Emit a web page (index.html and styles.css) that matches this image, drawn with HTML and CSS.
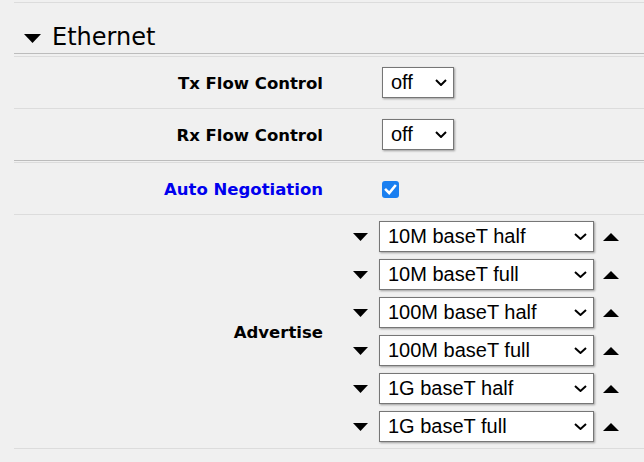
FILE: index.html
```html
<!DOCTYPE html>
<html lang="en">
<head>
<meta charset="utf-8">
<title>Ethernet</title>
<link rel="stylesheet" href="styles.css">
</head>
<body>
<div class="page">
  <div class="rule-top"></div>
  <h2 class="heading">
    <svg class="caret" width="17" height="9" viewBox="0 0 17 9"><polygon points="0,0 17,0 8.5,9" fill="#000"/></svg>
    <span>Ethernet</span>
  </h2>

  <div class="group">
    <div class="row">
      <div class="label">Tx Flow Control</div>
      <div class="control">
        <div class="select small"><span>off</span><svg class="chev" width="12" height="7" viewBox="0 0 12 7"><polyline points="1,1 6,6 11,1" fill="none" stroke="#000" stroke-width="2"/></svg></div>
      </div>
    </div>
    <div class="row">
      <div class="label">Rx Flow Control</div>
      <div class="control">
        <div class="select small"><span>off</span><svg class="chev" width="12" height="7" viewBox="0 0 12 7"><polyline points="1,1 6,6 11,1" fill="none" stroke="#000" stroke-width="2"/></svg></div>
      </div>
    </div>
  </div>

  <div class="group second">
    <div class="row">
      <div class="label link">Auto Negotiation</div>
      <div class="control">
        <span class="check" role="checkbox" aria-checked="true"><svg width="17" height="17" viewBox="0 0 17 17"><polyline points="4,8.8 7.2,12 13,5" fill="none" stroke="#fff" stroke-width="2.6" stroke-linecap="square"/></svg></span>
      </div>
    </div>
    <div class="row tall">
      <div class="label">Advertise</div>
      <div class="list">
        <div class="item">
          <svg class="tri" width="15" height="8" viewBox="0 0 15 8"><polygon points="0,0 15,0 7.5,8" fill="#000"/></svg>
          <div class="select wide"><span>10M baseT half</span><svg class="chev" width="13" height="7" viewBox="0 0 13 7"><polyline points="1,1 6.5,6 12,1" fill="none" stroke="#000" stroke-width="2"/></svg></div>
          <svg class="tri up" width="16" height="8" viewBox="0 0 16 8"><polygon points="0,8 16,8 8,0" fill="#000"/></svg>
        </div>
        <div class="item">
          <svg class="tri" width="15" height="8" viewBox="0 0 15 8"><polygon points="0,0 15,0 7.5,8" fill="#000"/></svg>
          <div class="select wide"><span>10M baseT full</span><svg class="chev" width="13" height="7" viewBox="0 0 13 7"><polyline points="1,1 6.5,6 12,1" fill="none" stroke="#000" stroke-width="2"/></svg></div>
          <svg class="tri up" width="16" height="8" viewBox="0 0 16 8"><polygon points="0,8 16,8 8,0" fill="#000"/></svg>
        </div>
        <div class="item">
          <svg class="tri" width="15" height="8" viewBox="0 0 15 8"><polygon points="0,0 15,0 7.5,8" fill="#000"/></svg>
          <div class="select wide"><span>100M baseT half</span><svg class="chev" width="13" height="7" viewBox="0 0 13 7"><polyline points="1,1 6.5,6 12,1" fill="none" stroke="#000" stroke-width="2"/></svg></div>
          <svg class="tri up" width="16" height="8" viewBox="0 0 16 8"><polygon points="0,8 16,8 8,0" fill="#000"/></svg>
        </div>
        <div class="item">
          <svg class="tri" width="15" height="8" viewBox="0 0 15 8"><polygon points="0,0 15,0 7.5,8" fill="#000"/></svg>
          <div class="select wide"><span>100M baseT full</span><svg class="chev" width="13" height="7" viewBox="0 0 13 7"><polyline points="1,1 6.5,6 12,1" fill="none" stroke="#000" stroke-width="2"/></svg></div>
          <svg class="tri up" width="16" height="8" viewBox="0 0 16 8"><polygon points="0,8 16,8 8,0" fill="#000"/></svg>
        </div>
        <div class="item">
          <svg class="tri" width="15" height="8" viewBox="0 0 15 8"><polygon points="0,0 15,0 7.5,8" fill="#000"/></svg>
          <div class="select wide"><span>1G baseT half</span><svg class="chev" width="13" height="7" viewBox="0 0 13 7"><polyline points="1,1 6.5,6 12,1" fill="none" stroke="#000" stroke-width="2"/></svg></div>
          <svg class="tri up" width="16" height="8" viewBox="0 0 16 8"><polygon points="0,8 16,8 8,0" fill="#000"/></svg>
        </div>
        <div class="item">
          <svg class="tri" width="15" height="8" viewBox="0 0 15 8"><polygon points="0,0 15,0 7.5,8" fill="#000"/></svg>
          <div class="select wide"><span>1G baseT full</span><svg class="chev" width="13" height="7" viewBox="0 0 13 7"><polyline points="1,1 6.5,6 12,1" fill="none" stroke="#000" stroke-width="2"/></svg></div>
          <svg class="tri up" width="16" height="8" viewBox="0 0 16 8"><polygon points="0,8 16,8 8,0" fill="#000"/></svg>
        </div>
      </div>
    </div>
  </div>
</div>
</body>
</html>
```

FILE: styles.css
```css
html, body {
  margin: 0;
  padding: 0;
  background: #f0f0f0;
}
body {
  width: 644px;
  height: 462px;
  overflow: hidden;
  font-family: "DejaVu Sans", Verdana, sans-serif;
  color: #000;
}
.page {
  margin-left: 14px;
}
.rule-top {
  margin-top: 2px;
  border-top: 1px solid #dcdcdc;
}
.heading {
  margin: 0;
  box-sizing: border-box;
  height: 51px;
  padding: 19px 0 0 10px;
  border-bottom: 1px solid #bcbcbc;
  display: flex;
  align-items: flex-start;
  font-size: 24px;
  font-weight: normal;
  line-height: 30px;
}
.heading .caret {
  margin-top: 12px;
  margin-right: 11px;
  flex: none;
}
.group {
  margin-top: 2px;
  border-top: 1px solid #dcdcdc;
  border-bottom: 1px solid #bcbcbc;
}
.group.second {
  margin-top: 1px;
  border-bottom: 1px solid #dcdcdc;
}
.row {
  display: flex;
  align-items: center;
  height: 51px;
}
.row + .row {
  border-top: 1px solid #dcdcdc;
}
.row.tall {
  height: auto;
  padding: 6px 0;
}
.label {
  width: 309px;
  flex: none;
  text-align: right;
  font-weight: bold;
  font-size: 16.5px;
  padding-top: 2px;
}
.label.link {
  color: #0000ee;
}
.control {
  padding-left: 59px;
  display: flex;
  align-items: center;
}
.select {
  box-sizing: border-box;
  height: 31px;
  background: #fff;
  border: 1px solid #767676;
  box-shadow: 1px 1px 2px rgba(0, 0, 0, 0.35);
  display: flex;
  align-items: center;
  justify-content: space-between;
  padding: 0 6px 0 8px;
  font-family: "Liberation Sans", Arial, sans-serif;
  font-size: 20px;
}
.select.small {
  width: 72px;
}
.select.wide {
  width: 215px;
}
.chev {
  flex: none;
}
.check {
  display: block;
  width: 17px;
  height: 17px;
  margin: 2px 0 0 0;
  background: #1a7ff0;
  border-radius: 3px;
}
.check svg {
  display: block;
}
.list {
  padding-left: 30px;
  display: flex;
  flex-direction: column;
  gap: 7px;
}
.item {
  display: flex;
  align-items: center;
}
.tri {
  flex: none;
  margin-right: 11px;
}
.tri.up {
  margin: 0 0 0 9px;
}
```
